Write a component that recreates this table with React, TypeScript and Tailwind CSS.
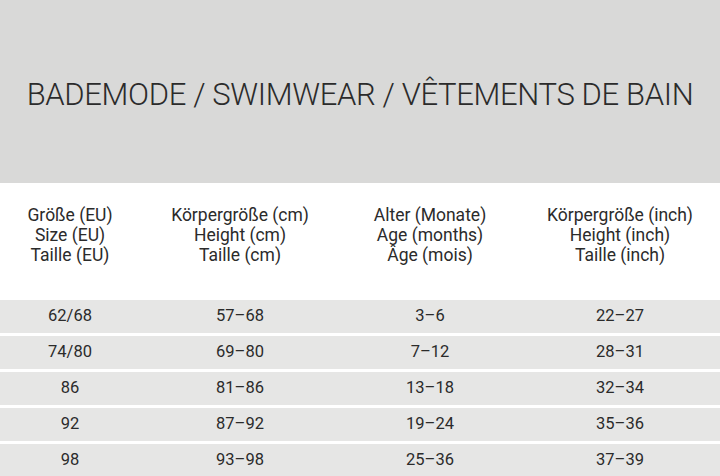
const headers = [
  ['Größe (EU)', 'Size (EU)', 'Taille (EU)'],
  ['Körpergröße (cm)', 'Height (cm)', 'Taille (cm)'],
  ['Alter (Monate)', 'Age (months)', 'Âge (mois)'],
  ['Körpergröße (inch)', 'Height (inch)', 'Taille (inch)'],
];

const rows = [
  ['62/68', '57–68', '3–6', '22–27'],
  ['74/80', '69–80', '7–12', '28–31'],
  ['86', '81–86', '13–18', '32–34'],
  ['92', '87–92', '19–24', '35–36'],
  ['98', '93–98', '25–36', '37–39'],
];

const cols = 'grid grid-cols-[140px_200px_180px_200px]';

export default function App() {
  return (
    <div className="w-[720px] h-[476px] overflow-hidden bg-white text-[#2b2b2b] font-['Roboto',sans-serif]">
      {/* Title band */}
      <div className="h-[183px] bg-[#d9d9d8] flex items-center justify-center">
        <h1 className="text-[31px] font-light tracking-[-0.35px] mt-[8px]">
          BADEMODE / SWIMWEAR / VÊTEMENTS DE BAIN
        </h1>
      </div>

      {/* Column headers */}
      <div className={`${cols} pt-[22px] h-[117px] text-[17.5px] leading-[20px]`}>
        {headers.map((h, i) => (
          <div key={i} className="flex flex-col items-center">
            {h.map((line) => (
              <span key={line}>{line}</span>
            ))}
          </div>
        ))}
      </div>

      {/* Size rows */}
      <div className="flex flex-col gap-[3px]">
        {rows.map((r, i) => (
          <div key={i} className={`${cols} h-[33px] items-center bg-[#e6e6e5] text-[16.5px]`}>
            {r.map((v, j) => (
              <span key={j} className="text-center">
                {v}
              </span>
            ))}
          </div>
        ))}
      </div>
    </div>
  );
}
